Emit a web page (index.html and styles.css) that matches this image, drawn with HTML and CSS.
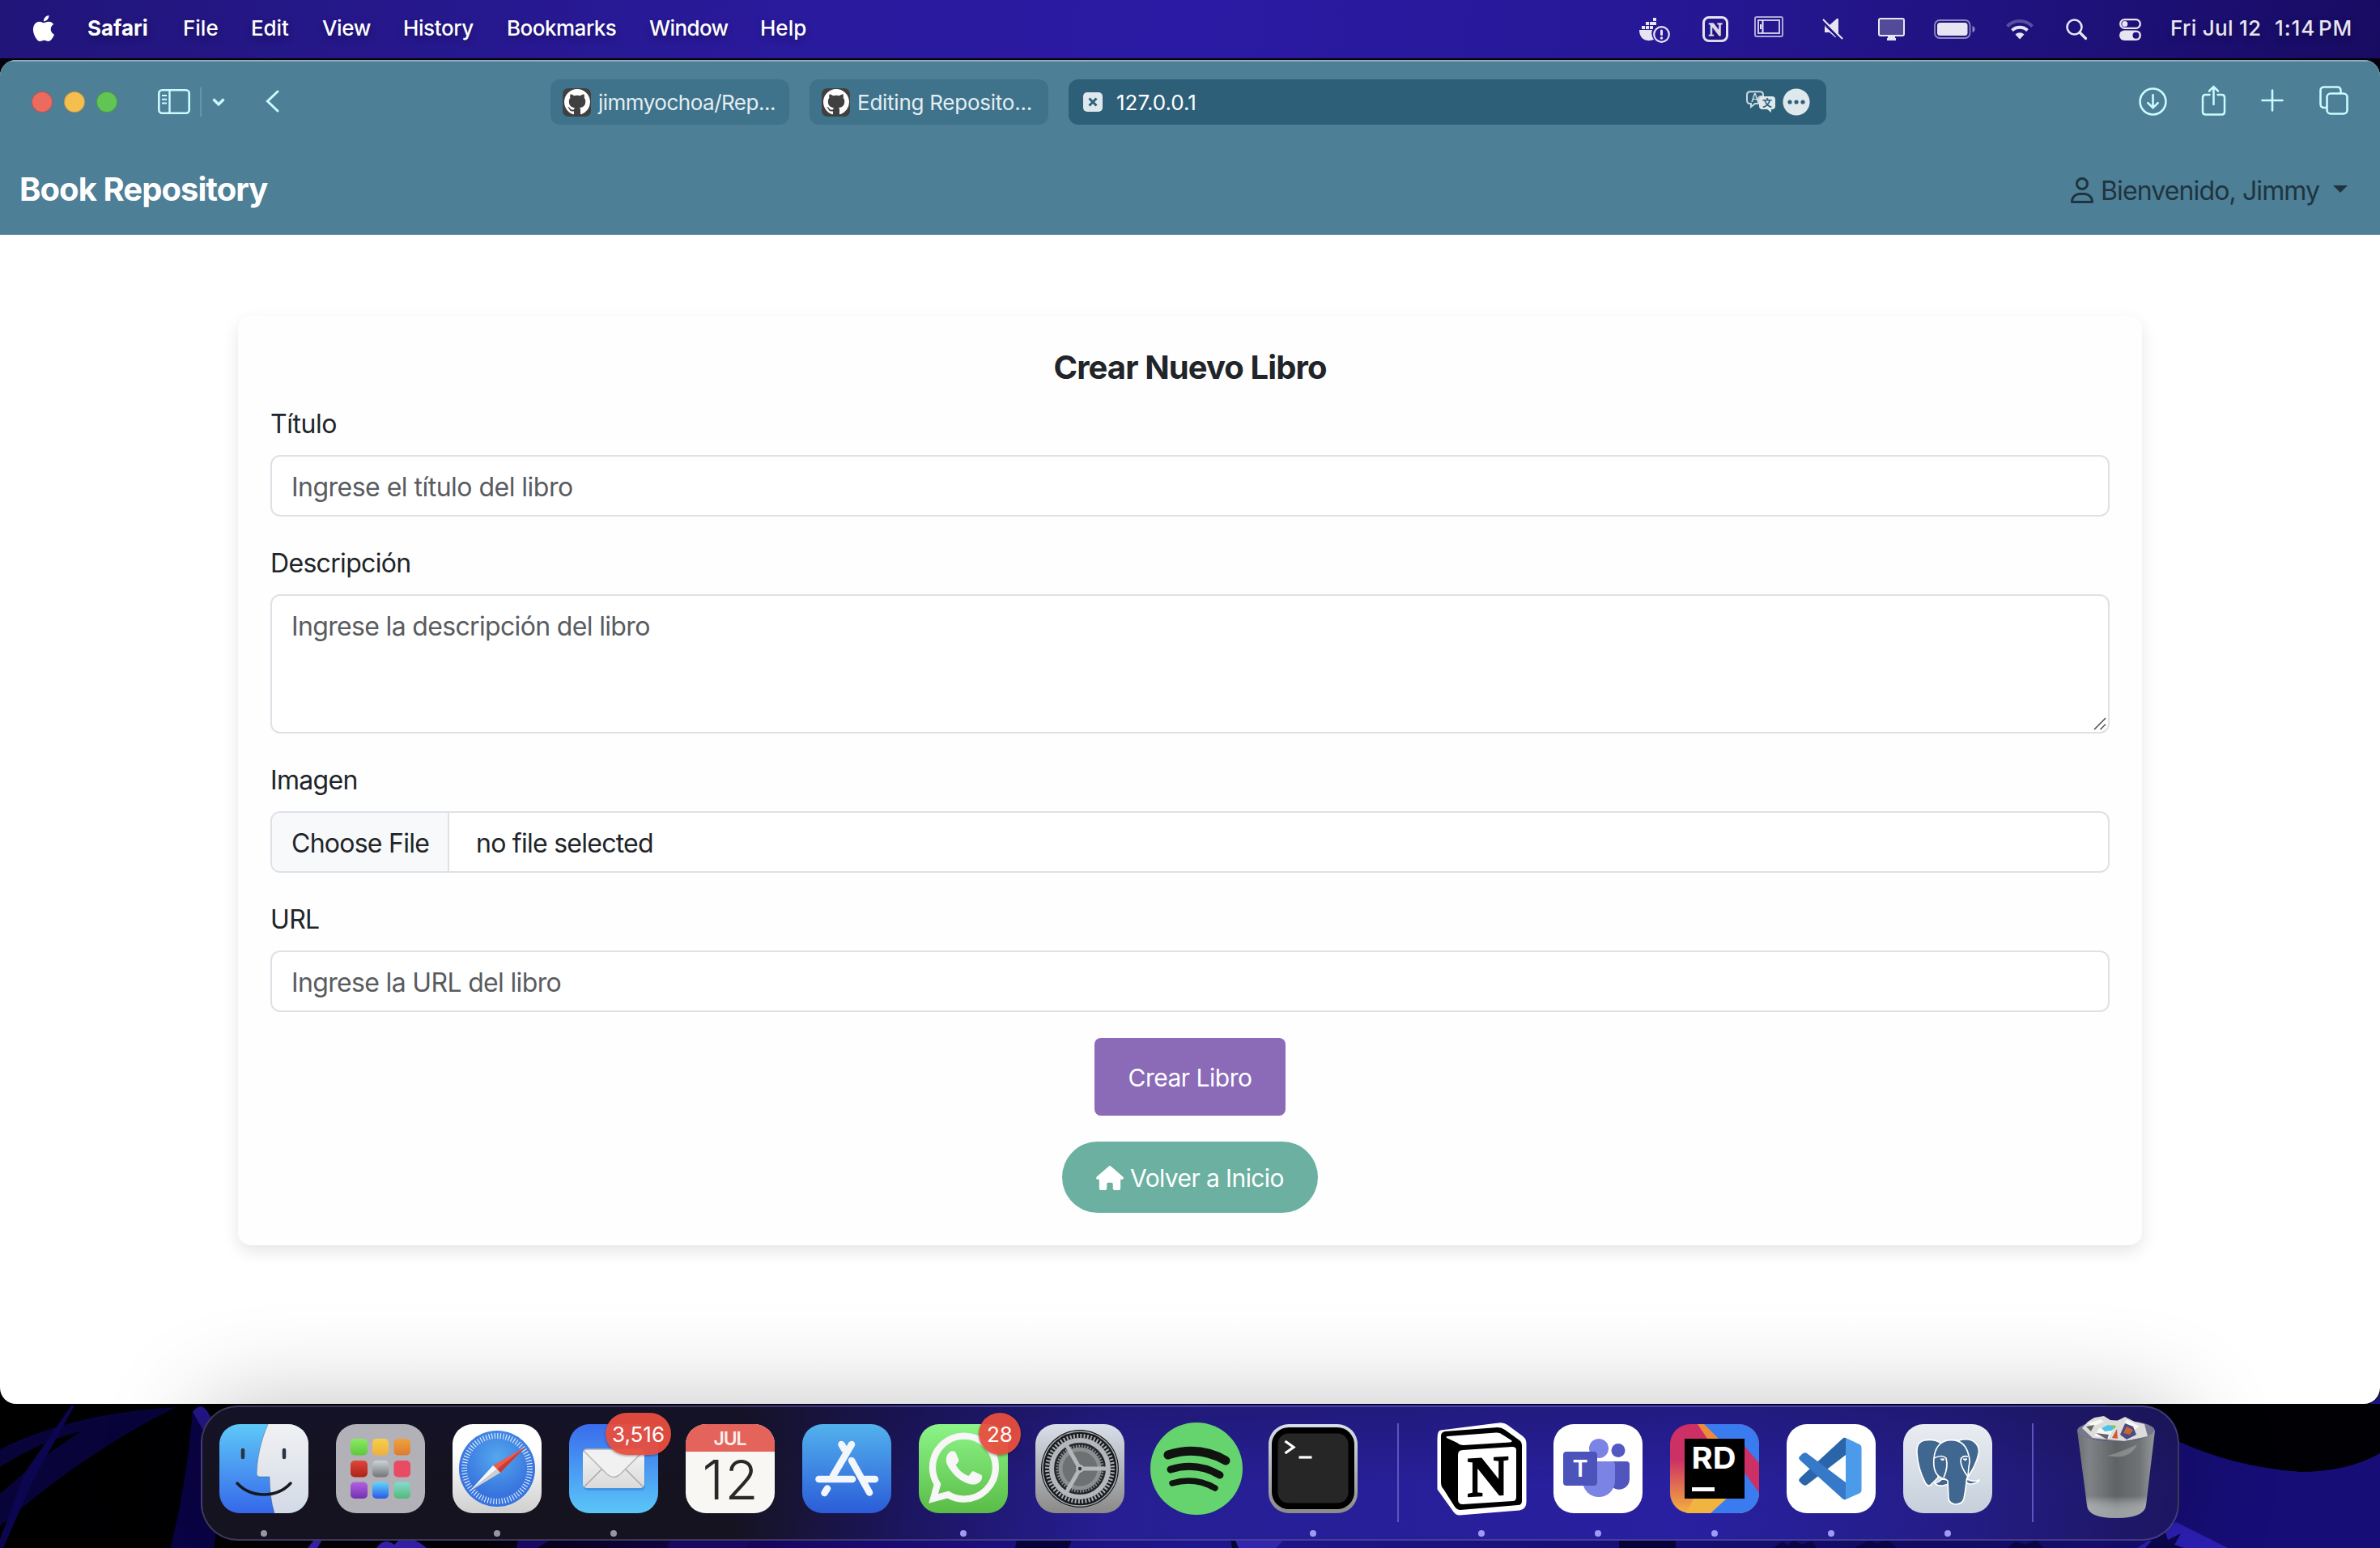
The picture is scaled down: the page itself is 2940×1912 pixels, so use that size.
FILE: index.html
```html
<!DOCTYPE html>
<html lang="es">
<head>
<meta charset="utf-8">
<title>Book Repository</title>
<link rel="stylesheet" href="styles.css">
</head>
<body>
<div class="desktop">
  <svg class="wallpaper" viewBox="0 0 2940 1912" preserveAspectRatio="none">
    <defs>
      <linearGradient id="wp" x1="0" x2="1" y1="0" y2="0"><stop offset="0" stop-color="#000"/><stop offset=".2" stop-color="#020008"/><stop offset=".34" stop-color="#1c0a78"/><stop offset=".5" stop-color="#241aa2"/><stop offset=".8" stop-color="#150d70"/><stop offset="1" stop-color="#1b1383"/></linearGradient>
    </defs>
    <rect width="2940" height="1912" fill="url(#wp)"/>
    <rect width="2940" height="120" fill="#04020c"/>
    <path d="M0 1790Q90 1745 218 1738Q110 1790 0 1885V1845Q50 1800 100 1768Q50 1780 0 1812Z" fill="#08043a"/>
    <path d="M92 1736L40 1830 4 1912H-4L30 1820 88 1736Z" fill="#0c0650"/>
    <path d="M238 1744Q250 1728 260 1750L290 1738 256 1770Q276 1850 264 1912H210Q220 1880 232 1800Z" fill="#0a0346"/>
    <path d="M238 1744Q250 1728 260 1750L256 1775Z" fill="#25168a"/>
    <path d="M388 1902h10l-6 10h-12zM465 1912q10-14 22-4l8-8q20 0 32 12z" fill="#3a22bc"/>
    <path d="M640 1902h40l-16 10h-26zM830 1900h100l-10 12h-96z" fill="#1b0a70"/>
    <path d="M1256 1902h68l-4 10h-66zM1520 1902h6l4 10h-8zM2000 1902h70v10h-70z" fill="#0a0440"/>
    <path d="M1526 1902h60l-10 10h-46z" fill="#3a2bc6"/>
    <path d="M2560 1734H2940V1800Q2900 1822 2840 1818Q2760 1812 2690 1780L2600 1734Z" fill="#000005"/>
    <path d="M2690 1780Q2760 1812 2840 1818Q2900 1818 2940 1795V1912H2600V1880L2690 1800Z" fill="#160e76"/>
    <path d="M2688 1880L2752 1912H2640Z" fill="#2d20b6"/>
    <path d="M2190 1912l12-8 6 5 8-7 10 6 12-5 6 9zM2290 1912l20-10 8 5 12-6 14 11zM2480 1912l10-8 12 4 14-6 8 10zM2650 1912l8-9-14 0 20-3 10-10 4 12 16-8-8 14 12 4z" fill="#0c0650"/>
  </svg>

  <header class="menubar">
    <nav class="menus">
      <svg class="apple" viewBox="2.3 0 18.7 24"><path fill="#fff" d="M12.152 6.896c-.948 0-2.415-1.078-3.96-1.04-2.04.027-3.91 1.183-4.961 3.014-2.117 3.675-.546 9.103 1.519 12.09 1.013 1.454 2.208 3.09 3.792 3.039 1.52-.065 2.09-.987 3.935-.987 1.831 0 2.35.987 3.96.948 1.637-.026 2.676-1.48 3.676-2.948 1.156-1.688 1.636-3.325 1.662-3.415-.039-.013-3.182-1.221-3.22-4.857-.026-3.04 2.48-4.494 2.597-4.559-1.429-2.09-3.623-2.324-4.39-2.376-2-.156-3.675 1.09-4.61 1.09zM15.53 3.83c.843-1.012 1.4-2.427 1.245-3.83-1.207.052-2.662.805-3.532 1.818-.78.896-1.454 2.338-1.273 3.714 1.338.104 2.715-.688 3.559-1.701"/></svg>
      <span class="menu app-name">Safari</span><span class="menu file">File</span><span class="menu edit">Edit</span><span class="menu view">View</span><span class="menu history">History</span><span class="menu bookmarks">Bookmarks</span><span class="menu window-menu">Window</span><span class="menu help">Help</span>
    </nav>
    <div class="status">
      <svg class="s-docker" viewBox="0 0 38 32" fill="#e8e5f3"><path d="M0 15h16a13 13 0 0 0 2 12C6 31 0 24 0 15Z"/><path d="M3 10h4v4H3zM8 10h4v4H8zM13 10h4v4h-4zM8 5h4v4H8zM13 5h4v4h-4zM17 5h4v4h-4zM17 0h4v4h-4z"/><circle cx="27.500" cy="20.500" r="9.300" fill="none" stroke="#e8e5f3" stroke-width="2.200"/><rect x="26" y="14.500" width="3" height="7.500" rx="1.500"/><circle cx="27.500" cy="25" r="1.700"/></svg>
      <svg class="s-notion" viewBox="0 0 32 32"><rect x="1.500" y="1.500" width="29" height="29" rx="6.500" fill="none" stroke="#e8e5f3" stroke-width="3"/><text x="16" y="24" text-anchor="middle" class="notion-n" font-size="23" fill="#e8e5f3" stroke="#e8e5f3" stroke-width=".8">N</text></svg>
      <svg class="s-stage" viewBox="0 0 36 26" fill="none" stroke="#e8e5f3"><rect x="1" y="1" width="34" height="24" rx="2" stroke-width="2" opacity=".7"/><rect x="5" y="5" width="26" height="16" stroke-width="2" opacity=".85"/><path d="M10.500 5v16M8 10v6" stroke-width="2"/></svg>
      <svg class="s-mute" viewBox="0 0 26 28"><path d="M20 1v22L3 9h6L18 1zM3 10L18 24H16L9 18H3Z" fill="#e8e5f3"/><path d="M0 3L24 29" stroke="#231485" stroke-width="3"/><path d="M1 2L25 26" stroke="#e8e5f3" stroke-width="2.200"/></svg>
      <svg class="s-display" viewBox="0 0 33 28"><rect x="1" y="1" width="31" height="21" rx="2" fill="#544a9a" stroke="#e8e5f3" stroke-width="2"/><path d="M12 22h9v3h1v3H11v-3h1z" fill="#e8e5f3"/></svg>
      <svg class="s-battery" viewBox="0 0 51 24"><rect x="1" y="1" width="43.500" height="22" rx="6" fill="none" stroke="#9088bd" stroke-width="1.800"/><rect x="4" y="4" width="37.500" height="16" rx="3.500" fill="#e8e5f3"/><path d="M47.500 8q3 1 3 4t-3 4z" fill="#9088bd"/></svg>
      <svg class="s-wifi" viewBox="0 0 34 26" fill="none"><path d="M1.500 9.500a22 22 0 0 1 31 0" stroke="#594fa0" stroke-width="4"/><path d="M7.500 14.500a14 14 0 0 1 19 0" stroke="#e8e5f3" stroke-width="4"/><path d="M11.500 19.500a8 8 0 0 1 11 0L17 25.500z" fill="#e8e5f3"/></svg>
      <svg class="s-search" viewBox="0 0 26 26" fill="none" stroke="#e8e5f3"><circle cx="10.500" cy="10.500" r="9" stroke-width="2.600"/><path d="M17 17l7.500 7.500" stroke-width="3.200" stroke-linecap="round"/></svg>
      <svg class="s-control" viewBox="0 0 27 27"><rect x="1.200" y="1.200" width="24.600" height="10.600" rx="5.300" fill="none" stroke="#e8e5f3" stroke-width="2.300"/><circle cx="6.800" cy="6.500" r="3.500" fill="#e8e5f3"/><rect y="14.500" width="27" height="12.500" rx="6.250" fill="#e8e5f3"/><circle cx="20.500" cy="20.700" r="4" fill="#20127c"/></svg>
      <span class="date">Fri Jul 12</span><span class="time">1:14 PM</span>
    </div>
  </header>

  <main class="window">
    <div class="toolbar">
      <div class="tools-left">
        <i class="light red"></i><i class="light yellow"></i><i class="light green"></i>
        <svg class="t-sidebar" viewBox="0 0 40 31" fill="none" stroke="#cbfbff"><rect x="1.300" y="1.300" width="37.400" height="28.400" rx="4" stroke-width="2.600"/><path d="M14.500 1v29" stroke-width="2.400"/><path d="M5 8h6M5 12.700h6M5 17.400h6" stroke-width="2"/></svg>
        <i class="split"></i>
        <svg class="t-chevron" viewBox="0 0 16 10" fill="none" stroke="#cbfbff" stroke-width="3.200"><path d="M1.500 1.500L8 8l6.500-6.500"/></svg>
        <svg class="t-back" viewBox="0 0 17 28" fill="none" stroke="#cbfbff" stroke-width="3" stroke-linecap="round"><path d="M15 2L2.500 14 15 26"/></svg>
      </div>
      <div class="tabs">
        <div class="tab"><span class="favicon"><svg viewBox="0 0 16 16"><path fill="#fff" d="M8 0C3.580 0 0 3.580 0 8c0 3.540 2.290 6.530 5.470 7.590.4.070.55-.17.55-.38 0-.19-.01-.82-.01-1.490-2.010.37-2.530-.49-2.690-.94-.09-.23-.48-.94-.82-1.130-.28-.15-.68-.52-.01-.53.63-.01 1.080.58 1.230.82.72 1.210 1.870.87 2.330.66.070-.52.28-.87.51-1.070-1.780-.2-3.640-.89-3.640-3.950 0-.87.31-1.590.82-2.150-.08-.2-.36-1.020.08-2.120 0 0 .67-.21 2.200.82.64-.18 1.320-.27 2-.27.68 0 1.360.09 2 .27 1.530-1.040 2.200-.82 2.200-.82.44 1.100.16 1.920.08 2.120.51.56.82 1.270.82 2.150 0 3.070-1.870 3.750-3.650 3.950.29.25.54.73.54 1.480 0 1.070-.01 1.930-.01 2.200 0 .21.15.46.55.38A8.013 8.013 0 0 0 16 8c0-4.420-3.580-8-8-8z"/></svg></span><span class="tab-text one">jimmyochoa/Rep...</span></div>
        <div class="tab"><span class="favicon"><svg viewBox="0 0 16 16"><path fill="#fff" d="M8 0C3.580 0 0 3.580 0 8c0 3.540 2.290 6.530 5.470 7.590.4.070.55-.17.55-.38 0-.19-.01-.82-.01-1.490-2.010.37-2.530-.49-2.690-.94-.09-.23-.48-.94-.82-1.130-.28-.15-.68-.52-.01-.53.63-.01 1.080.58 1.230.82.72 1.210 1.870.87 2.330.66.070-.52.28-.87.51-1.070-1.780-.2-3.640-.89-3.640-3.950 0-.87.31-1.590.82-2.150-.08-.2-.36-1.020.08-2.120 0 0 .67-.21 2.200.82.64-.18 1.320-.27 2-.27.68 0 1.360.09 2 .27 1.530-1.040 2.200-.82 2.200-.82.44 1.100.16 1.920.08 2.120.51.56.82 1.270.82 2.150 0 3.070-1.870 3.750-3.650 3.950.29.25.54.73.54 1.480 0 1.070-.01 1.930-.01 2.200 0 .21.15.46.55.38A8.013 8.013 0 0 0 16 8c0-4.420-3.580-8-8-8z"/></svg></span><span class="tab-text two">Editing Reposito...</span></div>
        <div class="tab active">
          <svg class="t-close" viewBox="0 0 24 24"><rect width="24" height="24" rx="5" fill="#dfe8ec"/><path d="M7.500 7.500l9 9M16.500 7.500l-9 9" stroke="#2e6079" stroke-width="3"/></svg>
          <span class="tab-text url">127.0.0.1</span>
          <svg class="t-translate" viewBox="0 0 37 28"><path d="M5 1.200h12q4 0 4 4V7h-2q-4 0-4 4v5h-4l-5 4v-4H5q-4 0-4-4V5.200q0-4 4-4Z" fill="none" stroke="#c9d9e0" stroke-width="2"/><text x="10.800" y="14" text-anchor="middle" class="ui" font-size="14" fill="#dfe8ec">A</text><path d="M20 7h12q4 0 4 4v8q0 4-4 4h-1v4l-5-4h-6q-4 0-4-4v-8q0-4 4-4Z" fill="#dfe8ec"/><text x="26" y="19.500" text-anchor="middle" class="cjk" font-size="12" fill="#2e6079">文</text></svg>
          <svg class="t-more" viewBox="0 0 34 34"><circle cx="17" cy="17" r="16.600" fill="#dfe8ec"/><g fill="#2e6079"><circle cx="9" cy="17" r="2.600"/><circle cx="17" cy="17" r="2.600"/><circle cx="25" cy="17" r="2.600"/></g></svg>
        </div>
      </div>
      <div class="tools-right">
        <svg class="t-download" viewBox="0 0 34 34" fill="none" stroke="#cbfbff" stroke-width="2.500" stroke-linecap="round"><circle cx="17" cy="17" r="15.500"/><path d="M17 9v15M11 18.500l6 6 6-6"/></svg>
        <svg class="t-share" viewBox="0 0 30 38" fill="none" stroke="#cbfbff" stroke-width="2.500" stroke-linecap="round"><path d="M10 12H5q-3.500 0-3.500 3.500v17.500q0 3.500 3.500 3.500h20q3.500 0 3.500-3.500V15.500q0-3.500-3.500-3.500h-5M15 24V2M9.500 7.500L15 2l5.500 5.500"/></svg>
        <svg class="t-plus" viewBox="0 0 28 28" stroke="#cbfbff" stroke-width="2.600" stroke-linecap="round"><path d="M14 1.500v25M1.500 14h25"/></svg>
        <svg class="t-tabs" viewBox="0 0 36 36" fill="none" stroke="#cbfbff" stroke-width="2.600"><path d="M9 27H6q-4.500 0-4.500-4.500V6Q1.500 1.500 6 1.500h16q4.500 0 4.500 4.500v3"/><rect x="9.500" y="9.500" width="25" height="25" rx="4.500"/></svg>
      </div>
    </div>

    <nav class="navbar">
      <a class="brand">Book Repository</a>
      <div class="user"><svg viewBox="0 0 448 512"><path fill="#1f343e" d="M304 128a80 80 0 1 0 -160 0 80 80 0 1 0 160 0zM96 128a128 128 0 1 1 256 0A128 128 0 1 1 96 128zM49.300 464H398.700c-8.900-63.300-63.300-112-129-112H178.300c-65.700 0-120.100 48.700-129 112zM0 482.300C0 383.800 79.800 304 178.300 304h91.400C368.200 304 448 383.800 448 482.300c0 16.400-13.300 29.700-29.700 29.700H29.700C13.300 512 0 498.700 0 482.300z"/></svg><span class="user-name">Bienvenido, Jimmy</span><i class="caret"></i></div>
    </nav>

    <section class="page">
      <form class="card">
        <h1 class="title"><span>Crear Nuevo Libro</span></h1>
        <div class="field"><label class="l-titulo">Título</label><div class="control c-titulo">Ingrese el título del libro</div></div>
        <div class="field"><label class="l-desc">Descripción</label><div class="control area c-desc">Ingrese la descripción del libro<svg class="grip" viewBox="0 0 16 16" stroke="#555" stroke-width="1.600"><path d="M1 15L15 1M8.500 15L15 8.500"/></svg></div></div>
        <div class="field"><label class="l-imagen">Imagen</label><div class="control file-control"><span class="choose"><b>Choose File</b></span><span class="no-file">no file selected</span></div></div>
        <div class="field"><label class="l-url">URL</label><div class="control c-url">Ingrese la URL del libro</div></div>
        <div class="btn create"><span>Crear Libro</span></div>
        <div class="btn back"><svg viewBox="0 0 576 512"><path fill="#fff" d="M575.800 255.500c0 18-15 32.100-32 32.100h-32l.7 160.200c0 2.700-.2 5.400-.5 8.100V472c0 22.100-17.900 40-40 40H456c-1.100 0-2.200 0-3.300-.1c-1.400 .1-2.800 .1-4.200 .1H416 392c-22.100 0-40-17.900-40-40V448 384c0-17.700-14.300-32-32-32H256c-17.700 0-32 14.300-32 32v64 24c0 22.100-17.900 40-40 40H160 128.100c-1.500 0-3-.1-4.500-.2c-1.200 .1-2.400 .2-3.600 .2H104c-22.100 0-40-17.900-40-40V360c0-.9 0-1.900 .1-2.800V287.600H32c-18 0-32-14-32-32.100c0-9 3-17 10-24L266.400 8c7-7 15-8 22-8s15 2 21 7L564.800 231.500c8 7 12 15 11 24z"/></svg><span>Volver a Inicio</span></div>
      </form>
    </section>
  </main>

  <footer class="dock">
    <div class="app running"><svg viewBox="0 0 110 110"><defs><linearGradient id="f1" x2="0" y2="1"><stop stop-color="#5ec8f8"/><stop offset="1" stop-color="#3568ea"/></linearGradient><linearGradient id="f2" x2="0" y2="1"><stop stop-color="#f1f1f3"/><stop offset="1" stop-color="#d2dae6"/></linearGradient><clipPath id="sq"><rect width="110" height="110" rx="25"/></clipPath></defs><g clip-path="url(#sq)"><rect width="110" height="110" fill="url(#f1)"/><path d="M60 0Q47 30 46 61Q46 65 50 65H62Q62 90 68 110H110V0Z" fill="url(#f2)"/><path d="M60 0Q47 30 46 61Q46 65 50 65H62Q62 90 68 110" fill="none" stroke="#3a4d66" stroke-opacity=".4"/></g><path d="M29 32v9M80 32v9" stroke="#2b3542" stroke-width="4.500" stroke-linecap="round"/><path d="M22 73Q35 87 55 87T88 73" fill="none" stroke="#16191f" stroke-width="3.500" stroke-linecap="round"/></svg></div>
    <div class="app"><svg viewBox="0 0 110 110"><rect width="110" height="110" rx="25" fill="#b1b1b7"/><defs><linearGradient id="l1" x2="0" y2="1"><stop stop-color="#8bea63"/><stop offset="1" stop-color="#5cc83d"/></linearGradient><linearGradient id="l2" x2="0" y2="1"><stop stop-color="#f6cf4b"/><stop offset="1" stop-color="#eeb03c"/></linearGradient><linearGradient id="l3" x2="0" y2="1"><stop stop-color="#eda33b"/><stop offset="1" stop-color="#df7a32"/></linearGradient><linearGradient id="l4" x2="0" y2="1"><stop stop-color="#e0483b"/><stop offset="1" stop-color="#ad2118"/></linearGradient><linearGradient id="l5" x2="0" y2="1"><stop stop-color="#ccd4d9"/><stop offset="1" stop-color="#737577"/></linearGradient><linearGradient id="l7" x2="0" y2="1"><stop stop-color="#b35fe4"/><stop offset="1" stop-color="#7232ae"/></linearGradient><linearGradient id="l8" x2="0" y2="1"><stop stop-color="#61d5fb"/><stop offset="1" stop-color="#2a59e6"/></linearGradient><linearGradient id="l9" x2="0" y2="1"><stop stop-color="#85dccf"/><stop offset="1" stop-color="#53b878"/></linearGradient></defs><rect x="18" y="18" width="21" height="20.500" rx="5" fill="url(#l1)"/><rect x="45" y="18" width="20" height="20.500" rx="5" fill="url(#l2)"/><rect x="71.500" y="18" width="20.500" height="20.500" rx="5" fill="url(#l3)"/><rect x="18" y="45" width="21" height="20.500" rx="5" fill="url(#l4)"/><rect x="45" y="45" width="20" height="20.500" rx="5" fill="url(#l5)"/><rect x="71.500" y="45" width="20.500" height="20.500" rx="5" fill="#e94b62"/><rect x="18" y="71.500" width="21" height="20.500" rx="5" fill="url(#l7)"/><rect x="45" y="71.500" width="20" height="20.500" rx="5" fill="url(#l8)"/><rect x="71.500" y="71.500" width="20.500" height="20.500" rx="5" fill="url(#l9)"/></svg></div>
    <div class="app running"><svg viewBox="0 0 110 110"><defs><linearGradient id="s1" x2="0" y2="1"><stop offset=".3" stop-color="#fff"/><stop offset="1" stop-color="#cfcfcf"/></linearGradient><radialGradient id="s2" cy=".35"><stop stop-color="#53a8ee"/><stop offset="1" stop-color="#3873de"/></radialGradient></defs><rect width="110" height="110" rx="25" fill="url(#s1)"/><circle cx="55" cy="55" r="47" fill="url(#s2)"/><circle cx="55" cy="55" r="40.500" fill="none" stroke="#e6f1fc" stroke-width="7" stroke-dasharray="1.100 2.434"/><path d="M90 28L50 51 59 60Z" fill="#ea5b50"/><path d="M90 28L55 55.500 59 60Z" fill="#c93b34"/><path d="M21 83L50 51 55 55.500Z" fill="#f7f7f7"/><path d="M21 83L55 55.500 59 60Z" fill="#cfcfd2"/></svg></div>
    <div class="app running"><svg viewBox="0 0 110 110"><defs><linearGradient id="m1" x2="0" y2="1"><stop stop-color="#3a6cec"/><stop offset="1" stop-color="#5ac6f8"/></linearGradient><linearGradient id="m2" x2="0" y2="1"><stop stop-color="#f4f4f4"/><stop offset="1" stop-color="#dadada"/></linearGradient></defs><rect width="110" height="110" rx="25" fill="url(#m1)"/><rect x="18" y="34" width="76" height="48" rx="5" fill="#2c67c0" opacity=".35"/><rect x="17" y="31" width="76" height="48" rx="5" fill="url(#m2)"/><path d="M19 77L42 54M91 77L68 54" stroke="#a8a8a8" stroke-width="1.500"/><path d="M18 33L47 62Q55 69 63 62L92 33Q91 31 88 31H22Q19 31 18 33Z" fill="#f1f1f1" stroke="#b5b5b5" stroke-width="1.500"/></svg><span class="badge wide">3,516</span></div>
    <div class="app"><svg viewBox="0 0 110 110"><rect width="110" height="110" rx="25" fill="#f8f7f4"/><path d="M0 34V25A25 25 0 0 1 25 0H85A25 25 0 0 1 110 25V34Z" fill="#e4635a"/><text x="55" y="26" text-anchor="middle" class="ui" font-weight="600" font-size="23" fill="#fbeeed" textLength="41">JUL</text><text x="55" y="93" text-anchor="middle" class="ui" font-weight="300" font-size="67" fill="#282828" textLength="69">12</text></svg></div>
    <div class="app"><svg viewBox="0 0 110 110"><defs><linearGradient id="a1" x2="0" y2="1"><stop stop-color="#52b2ed"/><stop offset="1" stop-color="#2b5cd8"/></linearGradient></defs><rect width="110" height="110" rx="25" fill="url(#a1)"/><g stroke="#f3f6fb" stroke-width="8.500" stroke-linecap="round"><path d="M48.500 25L52 31M61 45L83 84.500M20.500 68H62M78 68H90M31 79.500L27.500 85"/><path d="M61 25L38 64"/></g></svg></div>
    <div class="app running"><svg viewBox="0 0 110 110"><defs><linearGradient id="w1" x2="0" y2="1"><stop stop-color="#8cf588"/><stop offset="1" stop-color="#5abc46"/></linearGradient></defs><rect width="110" height="110" rx="25" fill="url(#w1)"/><g transform="translate(12.800 11) scale(3.580)"><path fill="#f7f7f7" stroke="#f7f7f7" stroke-width=".3" d="M17.472 14.382c-.297-.149-1.758-.867-2.030-.967-.273-.099-.471-.148-.67.15-.197.297-.767.966-.94 1.164-.173.199-.347.223-.644.075-.297-.15-1.255-.463-2.390-1.475-.883-.788-1.480-1.761-1.653-2.059-.173-.297-.018-.458.13-.606.134-.133.298-.347.446-.52.149-.174.198-.298.298-.497.099-.198.05-.371-.025-.52-.075-.149-.669-1.612-.916-2.207-.242-.579-.487-.5-.669-.51-.173-.008-.371-.01-.57-.01-.198 0-.52.074-.792.372-.272.297-1.040 1.016-1.040 2.479 0 1.462 1.065 2.875 1.213 3.074.149.198 2.096 3.200 5.077 4.487.709.306 1.262.489 1.694.625.712.227 1.360.195 1.871.118.571-.085 1.758-.719 2.006-1.413.248-.694.248-1.289.173-1.413-.074-.124-.272-.198-.57-.347m-5.421 7.403h-.004a9.870 9.870 0 01-5.031-1.378l-.361-.214-3.741.982.998-3.648-.235-.374a9.860 9.860 0 01-1.510-5.260c.001-5.450 4.436-9.884 9.888-9.884 2.640 0 5.122 1.030 6.988 2.898a9.825 9.825 0 012.893 6.994c-.003 5.450-4.437 9.884-9.885 9.884m8.413-18.297A11.815 11.815 0 0012.050 0C5.495 0 .16 5.335.157 11.892c0 2.096.547 4.142 1.588 5.945L.057 24l6.305-1.654a11.882 11.882 0 005.683 1.448h.005c6.554 0 11.890-5.335 11.893-11.893a11.821 11.821 0 00-3.480-8.413z"/></g></svg><span class="badge">28</span></div>
    <div class="app"><svg viewBox="0 0 110 110"><defs><linearGradient id="g1" x2="0" y2="1"><stop stop-color="#d9e0ea"/><stop offset="1" stop-color="#8b8a88"/></linearGradient></defs><rect width="110" height="110" rx="25" fill="url(#g1)"/><circle cx="55" cy="55" r="48" fill="#17191c"/><circle cx="55" cy="55" r="46" fill="none" stroke="#a9adb2" stroke-width="1.500"/><circle cx="55" cy="55" r="40.500" fill="none" stroke="#a9adb2" stroke-width="5" stroke-dasharray="2.100 2.141"/><circle cx="55" cy="55" r="35" fill="#25282b" stroke="#b4b8bc" stroke-width="6"/><circle cx="55" cy="55" r="24" fill="#6f7072" stroke="#8d9093" stroke-width="5"/><circle cx="55" cy="55" r="28" fill="none" stroke="#8d9093" stroke-width="3" stroke-dasharray="1.700 1.819"/><path d="M55 55H89M55 55L38 25M55 55L38 85" stroke="#b4b8bc" stroke-width="5"/><circle cx="55" cy="55" r="5" fill="#b4b8bc"/><circle cx="55" cy="55" r="2.200" fill="#333"/></svg></div>
    <div class="app"><svg viewBox="0 0 110 110"><circle cx="55" cy="55" r="57" fill="#65d36e"/><g fill="none" stroke="#10130f" stroke-linecap="round"><path d="M20 38Q58 26 91 45" stroke-width="11"/><path d="M23 56Q55 46 84 63" stroke-width="9"/><path d="M25 73Q53 65 78 79" stroke-width="7.500"/></g></svg></div>
    <div class="app running"><svg viewBox="0 0 110 110"><rect width="110" height="110" rx="25" fill="url(#g1)"/><rect x="4" y="4" width="102" height="101" rx="21" fill="#000"/><rect x="11.500" y="11.500" width="87" height="86" rx="13" fill="#262626"/><path d="M20.500 21L31 28.500 20.500 36" fill="none" stroke="#fff" stroke-width="3.200"/><path d="M37.500 41h16" stroke="#fff" stroke-width="3.200"/></svg></div>
    <i class="divider"></i>
    <div class="app running"><svg viewBox="0 0 110 110"><path d="M5 9Q2 9 2 18V80L22 108Q24 111 28 111L102 105Q109 104 109 96V24Q109 19 105 16L86 2Q82 -1 76 0Z" fill="#fff" stroke="#fff" stroke-width="3"/><path d="M10 9L75 4Q80 4 84 7L102 20Q105 22 105 27V95Q105 100 100 100L29 106Q25 106 22 102L8 80Q5 77 5 72V15Q5 10 10 9Z" fill="#000"/><path d="M13 15L73 10.500Q78 10 81 13L92 20Q94 22 90 22.500L33 26Q28 26 25 23L12 17Q11 15 13 15Z" fill="#fff"/><path d="M32 32L93 28Q98 28 98 32V90Q98 95 94 95L32 99Q26 99 26 93V38Q26 32 32 32Z" fill="#fff"/><text transform="translate(63 88) skewY(-3)" text-anchor="middle" class="notion-n" font-size="70" fill="#000" stroke="#000" stroke-width="2">N</text></svg></div>
    <div class="app running"><svg viewBox="0 0 110 110"><rect width="110" height="110" rx="25" fill="#fff"/><circle cx="80" cy="32.500" r="8.500" fill="#5359c2"/><path d="M72 46H90Q94 46 94 50V68A13 13 0 0 1 72 77Z" fill="#5056be"/><circle cx="56" cy="30" r="12" fill="#7b83e4"/><path d="M40 46H72Q76 46 76 50V70A20 20 0 0 1 36 70Z" fill="#7b83e4"/><rect x="12" y="34" width="42" height="42" rx="4" fill="#4c53bb"/><text x="33" y="65" text-anchor="middle" class="ui" font-weight="600" font-size="29" fill="#fff">T</text></svg></div>
    <div class="app running"><svg viewBox="0 0 110 110"><defs><linearGradient id="r1" x2="0" y2="1"><stop offset=".4" stop-color="#cd3065"/><stop offset="1" stop-color="#f4b13e"/></linearGradient></defs><g clip-path="url(#sq)"><rect width="110" height="110" fill="url(#r1)"/><path d="M40 0H110V110H50L90 60 50 20Z" fill="#3a7cf0"/><path d="M34 0H42L60 18H46Z" fill="#ee8a3c"/><path d="M90 25L110 48V85L92 60Z" fill="#cd3065"/><path d="M50 110L72 90 30 90 20 110Z" fill="#f2b440"/></g><rect x="18" y="18" width="74" height="74" fill="#000"/><text x="54" y="54.500" text-anchor="middle" class="ui" font-weight="700" font-size="37" fill="#fff" textLength="55" lengthAdjust="spacingAndGlyphs">RD</text><rect x="27" y="78" width="28" height="5" fill="#fff"/></svg></div>
    <div class="app running"><svg viewBox="0 0 110 110"><rect width="110" height="110" rx="25" fill="#fff"/><path d="M73 17V38L25 75Q22 77 19 74L16 71Q14 69 17 66L69 18Q71 16 73 17Z" fill="#2a65a9"/><path d="M73 93V72L25 36Q22 34 19 37L16 40Q14 42 17 45L69 92Q71 94 73 93Z" fill="#3579c8"/><path d="M73 17L90 25Q92.500 26 92.500 29V82Q92.500 84 90 85.500L73 93Z" fill="#4c9aea"/></svg></div>
    <div class="app running"><svg viewBox="0 0 110 110"><defs><linearGradient id="p1" x2="0" y2="1"><stop stop-color="#eaedf2"/><stop offset="1" stop-color="#c5d0db"/></linearGradient></defs><rect width="110" height="110" rx="25" fill="url(#p1)"/><g fill="#40678f" stroke="#fff" stroke-width="1.700" stroke-linejoin="round"><path d="M46 23Q38 18 26 20Q16 22 17 36Q18 54 27 72Q31 79 35 74L43 66Z"/><path d="M66 21Q80 16 88 22Q95 28 93 37Q90 51 80 65L72 50Z"/><path d="M79 68Q86 72 94 69Q92 73 84 74 78 74 78 70Z"/><path d="M48 68Q44 72 39 73Q43 77 49 76L56 74V69Z"/><path d="M38 42Q40 23 55 20Q76 17 81 39Q83 45 81 53L80 64Q78 68 78 72Q77 82 75 92Q73 99 64 99Q57 98 56 92L55 70Q52 67 49 67Q36 63 38 42Z"/></g><path d="M38 42Q48 37 53 42Q56 53 50 66M80 40Q72 38 71 45Q71 53 80 65" fill="none" stroke="#fff" stroke-width="1.700"/><path d="M46 43h5l-2 2zM74 43h5l-2 2z" fill="#fff" stroke="#fff"/></svg></div>
    <i class="divider second"></i>
    <div class="app trash"><svg viewBox="0 0 98 128"><defs><linearGradient id="t1"><stop stop-color="#6d7072"/><stop offset=".15" stop-color="#818486"/><stop offset=".5" stop-color="#5f6365"/><stop offset=".8" stop-color="#707375"/><stop offset="1" stop-color="#96999b"/></linearGradient><linearGradient id="t2" x2="0" y2="1"><stop offset=".75" stop-color="#fff" stop-opacity="0"/><stop offset=".92" stop-color="#b5b8ba" stop-opacity=".7"/></linearGradient></defs><ellipse cx="49" cy="19" rx="48" ry="13" fill="#777890"/><path d="M7 16L14 8 22 3 34 1 42 6 50 7 60 2 72 8 84 11 88 26 60 32 20 28Z" fill="#dcdcda"/><path d="M14 10L30 5 34 8 20 14zM62 5L78 14 68 20 58 12zM28 16L48 14 40 28 22 26z" fill="#f7f7f6"/><path d="M31 16l8-4 9 2-4 5-9 1z" fill="#4fc2e6"/><path d="M42 12l7 1-2 4z" fill="#7cc84c"/><path d="M60 10l10 4 4 10-12 6-8-6z" fill="#4a4a86"/><path d="M62 14l8 4-4 6-8-2z" fill="#c96530"/><path d="M44 28l6-11 1 12z" fill="#cf5a3a"/><path d="M24 22l16 2-2 6zM12 14l10-2-4 8z" fill="#666466"/><path d="M1 19Q10 32 49 32T97 19L86 111Q84 127 49 127T13 111Z" fill="url(#t1)"/><path d="M1 19Q10 32 49 32T97 19L86 111Q84 127 49 127T13 111Z" fill="url(#t2)"/><path d="M38 50Q54 46 75 36Q66 56 38 50Z" fill="#a9abac" opacity=".5"/></svg></div>
  </footer>
</div>
</body>
</html>
```
FILE: styles.css
```css
* { box-sizing: border-box; }
body { margin: 0; font-family: Inter, "Noto Sans", sans-serif; background: #000; }
svg { display: block; flex: none; overflow: visible; }
.desktop { position: relative; width: 2940px; height: 1912px; overflow: hidden; display: flex; flex-direction: column; align-items: center; }
.wallpaper { position: absolute; inset: 0; width: 2940px; height: 1912px; }
.ui { font-family: Inter, sans-serif; }
.cjk { font-family: "Noto Sans CJK SC", sans-serif; font-weight: 700; }
.notion-n { font-family: "Liberation Serif", serif; font-weight: 700; }

/* menu bar */
.menubar { position: relative; width: 100%; height: 72px; flex: none; display: flex; justify-content: space-between; align-items: center; padding: 0 33px 3px 41px; color: #fff; font-size: 26px; font-weight: 500; background: linear-gradient(100deg, #21157a 0, #2a1a9d 34%, #2b1aa3 50%, #271898 68%, #20127f 84%, #170b62 100%); text-shadow: 0 4px 8px rgba(0,0,0,.3); }
.menus, .status { display: flex; align-items: center; white-space: nowrap; }
.apple { width: 25px; height: 32px; margin-right: 42px; }
.app-name { font-weight: 700; width: 118px; }
.file { width: 84px; } .edit { width: 88px; letter-spacing: -.1px; } .view { width: 100px; letter-spacing: -.4px; } .history { width: 128px; letter-spacing: -.4px; }
.bookmarks { width: 176px; letter-spacing: -.5px; } .window-menu { width: 137px; letter-spacing: -.6px; } .help { width: 60px; }
.status { color: #e8e5f3; }
.s-docker { width: 38px; height: 32px; margin-right: 40px; margin-top: 6px; }
.s-notion { width: 32px; height: 32px; margin-right: 32px; margin-top: 3px; }
.s-stage { width: 36px; height: 26px; margin-right: 48px; margin-bottom: 3px; }
.s-mute { width: 26px; height: 28px; margin-right: 43px; margin-top: 3px; }
.s-display { width: 33px; height: 28px; margin-right: 36px; margin-top: 3px; }
.s-battery { width: 51px; height: 24px; margin-right: 38px; margin-top: 3px; }
.s-wifi { width: 34px; height: 26px; margin-right: 40px; margin-top: 3px; }
.s-search { width: 26px; height: 26px; margin-right: 40px; margin-top: 3px; }
.s-control { width: 27px; height: 27px; margin-right: 36px; margin-top: 3px; }
.date { width: 129px; letter-spacing: .3px; } .time { width: 97px; letter-spacing: .9px; word-spacing: -4px; }

/* browser window */
.window { position: relative; width: 2940px; height: 1660px; flex: none; margin-top: 2px; border-radius: 20px; overflow: hidden; background: #fff; display: flex; flex-direction: column; box-shadow: 0 0 0 1px #000; }
.toolbar { height: 104px; flex: none; background: #4d7f97; border-top: 2px solid #8eaebd; padding: 22px 39px 0; display: flex; align-items: flex-start; }
.tools-left, .tools-right { display: flex; align-items: center; height: 56px; }
.tools-left { width: 641px; }
.light { width: 26px; height: 26px; border-radius: 50%; margin-right: 14px; border: 1px solid rgba(0,0,0,.2); }
.red { background: #ed6a5e; } .yellow { background: #f5bf4f; } .green { background: #61c554; margin-right: 50px; }
.t-sidebar { width: 40px; height: 31px; margin-bottom: 2px; }
.split { width: 2px; height: 36px; background: #6796ab; margin: 0 13px 0 12px; }
.t-chevron { width: 16px; height: 10px; margin-right: 50px; }
.t-back { width: 17px; height: 28px; margin-bottom: 2px; }
.tabs { display: flex; gap: 25px; }
.tab { width: 295px; height: 56px; border-radius: 12px; background: #3f738b; padding: 0 15px; display: flex; align-items: center; color: #e3eef2; font-size: 26px; white-space: nowrap; }
.tab.active { width: 936px; background: #2d5f78; padding: 0 20px 0 18px; color: #fff; }
.favicon { width: 35px; height: 35px; border-radius: 7px; background: #404040; padding: 1.5px; margin-right: 9px; flex: none; }
.favicon svg { width: 32px; height: 32px; }
.one { letter-spacing: -.5px; } .two { letter-spacing: -.25px; }
.t-close { width: 24px; height: 24px; margin-right: 17px; }
.url { flex: 1; }
.t-translate { width: 37px; height: 28px; margin-right: 8px; }
.t-more { width: 34px; height: 34px; }
.tools-right { flex: 1; justify-content: flex-end; }
.t-download { width: 35px; height: 35px; margin: 0 42px 2px 0; }
.t-share { width: 31px; height: 38px; margin: 0 43px 5px 0; }
.t-plus { width: 28px; height: 28px; margin: 0 44px 4px 0; }
.t-tabs { width: 36px; height: 36px; margin-bottom: 4px; }

/* page */
.navbar { height: 112px; flex: none; background: #4d7f97; display: flex; justify-content: space-between; align-items: center; padding: 0 40px 0 24px; }
.brand { color: #fff; font-size: 40px; font-weight: 700; letter-spacing: -.95px; margin-top: -2px; }
.user { display: flex; align-items: center; color: #1f343e; font-size: 32px; padding-top: 2px; white-space: nowrap; }
.user svg { width: 28px; height: 32px; margin-right: 9px; }
.user-name { width: 271px; letter-spacing: -.88px; }
.caret { border: 9.600px solid transparent; border-top-color: #1f343e; border-bottom: 0; margin: 0 0 3px 16px; }
.page { flex: 1; display: flex; justify-content: center; align-items: flex-start; padding-top: 100px; }
.card { width: 2352px; height: 1148px; border-radius: 16px; background: #fefefe; box-shadow: 0 8px 20px rgba(0,0,0,.1); padding: 40px; color: #212529; font-size: 32px; line-height: 48px; display: flex; flex-direction: column; align-items: center; }
.title { margin: 0 0 20px; font-size: 40px; line-height: 48px; font-weight: 700; letter-spacing: -.9px; }
.field { width: 100%; margin-bottom: 32px; display: flex; flex-direction: column; gap: 16px; align-items: flex-start; }
.field label { height: 48px; line-height: 51px; letter-spacing: -.68px; }
.field .l-titulo { letter-spacing: -.45px; }
.control { position: relative; width: 100%; height: 76px; border: 2px solid #dee2e6; border-radius: 12px; padding: 12px 24px; color: #595c5f; background: #fff; white-space: nowrap; line-height: 51px; letter-spacing: -.66px; }
.c-titulo { letter-spacing: -.52px; }
.area { height: 172px; }
.grip { position: absolute; right: 2px; bottom: 2px; width: 16px; height: 16px; }
.file-control { display: flex; padding: 0; color: #212529; overflow: hidden; letter-spacing: -.74px; }
.choose { width: 219px; background: #f8f9fa; border-right: 2px solid #dee2e6; padding: 12px 0 12px 24px; margin-right: 33px; }
.choose b { font-weight: 400; }
.no-file { padding: 12px 0; }
.btn { display: flex; align-items: center; justify-content: center; color: #fff; white-space: nowrap; flex: none; font-size: 30px; padding-top: 2px; }
.create { width: 236px; height: 96px; border-radius: 8px; background: #8b6ab8; margin-bottom: 32px; letter-spacing: -.5px; }
.back { width: 316px; height: 88px; border-radius: 44px; background: #6bb0a1; letter-spacing: -.6px; }
.back svg { width: 34px; height: 30px; margin-right: 8px; }

/* dock */
.dock { position: relative; width: 2444px; height: 167px; flex: none; margin-top: 2px; border: 2px solid rgba(150,145,210,.3); border-radius: 46px; padding: 21px 20px 0 21px; display: flex; background: linear-gradient(to bottom, rgba(20,16,60,.3), rgba(20,16,60,0) 60%), linear-gradient(97deg, #15131f 0, #15131f 27%, #1c1560 36%, #261e92 46%, #2820a0 75%, #241d88 88%, #1c1660 100%); box-shadow: 0 0 120px rgba(0,0,0,.25); }
.app { position: relative; width: 110px; height: 110px; margin-right: 34px; flex: none; display: flex; flex-direction: column; align-items: center; }
.app > svg { width: 110px; height: 110px; }
.running::after { content: ""; flex: none; width: 8px; height: 8px; border-radius: 50%; background: #a199f5; margin-top: 21px; }
.app:nth-child(-n+4)::after { background: #9795a8; }
.badge { position: absolute; left: 74px; top: -14px; width: 52px; height: 52px; border-radius: 26px; background: rgba(232,78,62,.95); color: #fff; font-size: 26px; line-height: 53px; text-align: center; box-shadow: 0 1px 3px rgba(0,0,0,.4); }
.badge.wide { left: 45px; width: 81px; }
.divider { width: 2px; height: 122px; margin: -1px 47px 0 15px; background: #5d54bd; flex: none; }
.divider.second { margin: -1px 53px 0 15px; }
.trash { width: 98px; margin: -11px 0 0; }
.trash > svg { width: 98px; height: 128px; }
```
